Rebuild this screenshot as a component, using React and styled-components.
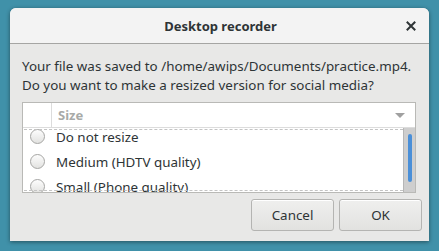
import React from "react";
import styled, { createGlobalStyle } from "styled-components";

const GlobalStyle = createGlobalStyle`
  html, body {
    margin: 0;
    padding: 0;
    background: #4091a9;
  }
  body {
    font-family: "Noto Sans", "DejaVu Sans", sans-serif;
    color: #2e3436;
  }
`;

const options = ["Do not resize", "Medium (HDTV quality)", "Small (Phone quality)"];

const App = () => {
  return (
    <>
      <GlobalStyle />
      <Desktop>
        <Dialog>
          <TitleBar>
            <Title>Desktop recorder</Title>
            <CloseButton aria-label="close">
              <svg width="10" height="10" viewBox="0 0 10 10">
                <path d="M1.5 1.5 L8.5 8.5 M8.5 1.5 L1.5 8.5" stroke="#2e3436" strokeWidth="2" strokeLinecap="square" />
              </svg>
            </CloseButton>
          </TitleBar>
          <Body>
            <Message>
              Your file was saved to /home/awips/Documents/practice.mp4.
              <br />
              Do you want to make a resized version for social media?
            </Message>
            <ListBox>
              <Header>
                <HeaderSpacer />
                <HeaderLabel>Size</HeaderLabel>
                <HeaderArrow />
              </Header>
              <RowsArea>
                <Rows>
                  {options.map((label) => (
                    <Row key={label}>
                      <RadioCell>
                        <Radio />
                      </RadioCell>
                      <RowLabel>{label}</RowLabel>
                    </Row>
                  ))}
                  <FocusLine $edge="top" />
                  <FocusLine $edge="bottom" />
                </Rows>
                <Scrollbar>
                  <Slider />
                </Scrollbar>
              </RowsArea>
            </ListBox>
          </Body>
          <ButtonRow>
            <Button>Cancel</Button>
            <Button>OK</Button>
          </ButtonRow>
        </Dialog>
      </Desktop>
    </>
  );
};

const Desktop = styled.div`
  width: 439px;
  height: 251px;
  padding: 8px 10px 0;
  box-sizing: border-box;
  overflow: hidden;
`;

const Dialog = styled.div`
  width: 419px;
  height: 233px;
  background: #e8e8e7;
  border-radius: 6px 6px 0 0;
  box-shadow: 0 1px 4px rgba(0, 0, 0, 0.45);
  display: flex;
  flex-direction: column;
  overflow: hidden;
`;

const TitleBar = styled.div`
  height: 35px;
  flex: none;
  background: #f3f3f3;
  border-bottom: 1px solid #a5a5a3;
  display: flex;
  align-items: center;
  justify-content: center;
  position: relative;
`;

const Title = styled.div`
  font-size: 13px;
  font-weight: 700;
  color: #2e3436;
  margin-left: 2px;
`;

const CloseButton = styled.div`
  position: absolute;
  right: 13px;
  top: 13px;
  display: flex;
`;

const Body = styled.div`
  padding: 13px 13px 0 12px;
  display: flex;
  flex-direction: column;
`;

const Message = styled.div`
  font-size: 13.4px;
  line-height: 19px;
  white-space: nowrap;
  color: #2e3436;
`;

const ListBox = styled.div`
  margin-top: 7px;
  height: 91px;
  box-sizing: border-box;
  border: 1px solid #b9b9b6;
  background: #fff;
  display: flex;
  flex-direction: column;
`;

const Header = styled.div`
  height: 24px;
  flex: none;
  display: flex;
  align-items: center;
  border-bottom: 1px solid #dcdcdc;
`;

const HeaderSpacer = styled.div`
  width: 28px;
  height: 100%;
  border-right: 1px solid #dcdcdc;
`;

const HeaderLabel = styled.div`
  flex: 1;
  padding-left: 6px;
  font-size: 13px;
  font-weight: 700;
  color: #a8aaa8;
`;

const HeaderArrow = styled.div`
  width: 0;
  height: 0;
  margin-right: 10px;
  border-left: 5px solid transparent;
  border-right: 5px solid transparent;
  border-top: 5px solid #a0a0a0;
`;

const RowsArea = styled.div`
  flex: 1;
  display: flex;
  min-height: 0;
`;

const Rows = styled.div`
  flex: 1;
  overflow: hidden;
  position: relative;
  & > div:first-child {
    margin-top: -4px;
  }
`;

const FocusLine = styled.div`
  position: absolute;
  left: 1px;
  right: 0;
  ${(p) => (p.$edge === "top" ? "top: 1px;" : "bottom: 1px;")}
  border-top: 1px dashed #c4c4c4;
`;

const Row = styled.div`
  height: 25px;
  display: flex;
  align-items: center;
`;

const RadioCell = styled.div`
  width: 28px;
  display: flex;
  justify-content: center;
`;

const Radio = styled.div`
  width: 13px;
  height: 13px;
  border-radius: 50%;
  border: 1px solid #a5a5a3;
  background: linear-gradient(#fdfdfd, #e2e2e0);
`;

const RowLabel = styled.div`
  margin-left: 5px;
  font-size: 13.4px;
  white-space: nowrap;
  color: #2e3436;
`;

const Scrollbar = styled.div`
  width: 12px;
  flex: none;
  background: #cecece;
  border-left: 1px solid #b6b6b6;
  display: flex;
  justify-content: center;
  padding-top: 6px;
  box-sizing: border-box;
`;

const Slider = styled.div`
  width: 4px;
  height: 48px;
  border-radius: 2px;
  background: #4a8fd8;
`;

const ButtonRow = styled.div`
  display: flex;
  justify-content: flex-end;
  gap: 5px;
  padding: 6px 7px 0 0;
`;

const Button = styled.div`
  width: 83px;
  height: 32px;
  box-sizing: border-box;
  border: 1px solid #b4b4b2;
  border-radius: 3px;
  background: linear-gradient(#efefee, #e2e2e0);
  box-shadow: inset 0 1px #ffffff;
  display: flex;
  align-items: center;
  justify-content: center;
  font-size: 13.4px;
  color: #2e3436;
`;

export default App;
